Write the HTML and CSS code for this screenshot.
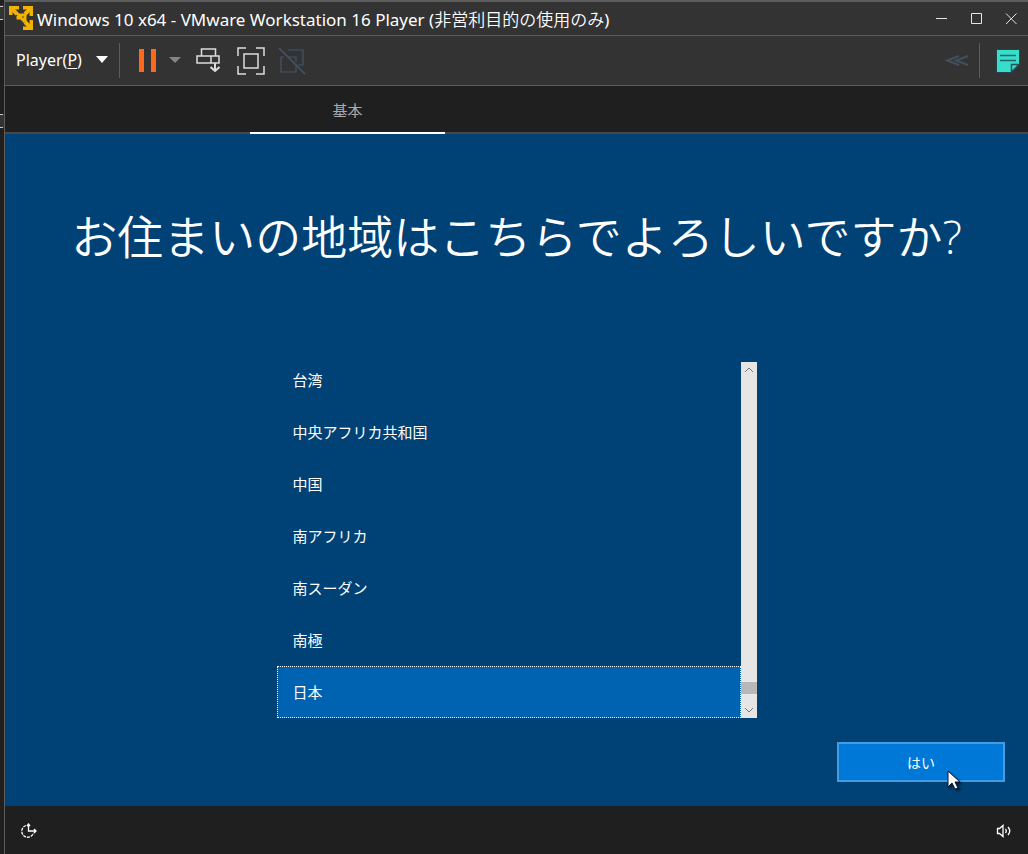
FILE: index.html
```
<!DOCTYPE html>
<html lang="ja">
<head>
<meta charset="utf-8">
<title>Windows 10 x64 - VMware Workstation 16 Player</title>
<link rel="stylesheet" href="styles.css">
</head>
<body>
<div class="desktop">
  <div class="behind" aria-hidden="true">
    <svg width="4" height="160" viewBox="0 0 4 160" shape-rendering="crispEdges"><path fill="#333" d="M0 5h4v15H0zM0 114h4v14H0z"/><path fill="#ccc" d="M0 6h3v1H0zM0 19h3v1H0zM0 114h3v1H0zM0 127h3v1H0z"/></svg>
  </div>
  <div class="window">
    <header class="titlebar">
      <svg class="logo" width="24" height="24" viewBox="0 0 24 24" fill="none" stroke="#f2b200"><path stroke-width="3.500" d="M1.700 9V1.700H10M14 1.700h8.300V10M22.300 14v8.300H14"/><path stroke-width="4" d="M3 3l5 5M21 3l-5 5M21 21l-5-5"/><path stroke-width="3" d="M7 7l3 2h6v7M9 8v4h4M12 12l4 4"/></svg>
      <h1 class="caption">Windows 10 x64 - VMware Workstation 16 Player (<span class="ja">非営利目的の使用のみ</span>)</h1>
      <div class="controls">
        <button type="button" aria-label="最小化"><svg width="12" height="12" viewBox="0 0 12 12"><path d="M1 5.500h11"/></svg></button>
        <button type="button" aria-label="最大化"><svg width="12" height="12" viewBox="0 0 12 12"><path d="M1.500.5h10v10h-10z"/></svg></button>
        <button type="button" aria-label="閉じる"><svg width="12" height="12" viewBox="0 0 12 12"><path d="M1 .5l10.500 10.500M11.500.5L1 11"/></svg></button>
      </div>
    </header>
    <nav class="toolbar">
      <button type="button" class="player"><span>Player(<u>P</u>)</span><svg width="12" height="8" viewBox="0 0 12 8"><path fill="#fff" d="M0 0h12L6 7z"/></svg></button>
      <span class="sep"></span>
      <button type="button" class="pause" aria-label="一時停止"><svg width="42" height="24" viewBox="0 0 42 24"><path fill="#ff6a1a" d="M0 0h5v23H0zM12 0h5v23h-5z"/><path fill="#858585" d="M30 8h12l-6 6z"/></svg></button>
      <button type="button" class="tool" aria-label="Ctrl+Alt+Del を送信"><svg width="28" height="28" viewBox="0 0 28 28" fill="none" stroke="#ddd" stroke-width="1.500"><path d="M5.500 2h14v7h-14zM1 9h22v7H1zM15 9v7"/><path stroke-width="2" d="M19 16v8M14.500 20l4.500 4 4.500-4"/></svg></button>
      <button type="button" class="tool" aria-label="全画面表示"><svg width="28" height="28" viewBox="0 0 28 28" fill="none" stroke="#ddd" stroke-width="1.500"><path d="M1 9V1h8M19 1h8v8M27 19v8h-8M9 27H1v-8"/><path d="M7 7h14v14H7z"/></svg></button>
      <button type="button" class="tool" aria-label="ユニティ" disabled><svg width="28" height="28" viewBox="0 0 28 28" fill="none" stroke="#42566a" stroke-width="1.200"><path d="M10 3h15v15h-5M6 10H3v15h15v-6M11 10h7v5"/><path stroke-width="1.600" d="M1 1l26 26"/></svg></button>
      <button type="button" class="collapse" aria-label="折りたたむ"><svg width="24" height="12" viewBox="0 0 24 12" fill="none" stroke="#42505f" stroke-width="2"><path d="M14 1L2 5.500 14 10M23 1l-12 4.500L23 10"/></svg></button>
      <span class="sep"></span>
      <button type="button" class="note" aria-label="メモ"><svg width="24" height="24" viewBox="0 0 24 24"><path fill="#36dfc9" stroke="#2b3f4d" d="M.5.5h23v15l-8 8H.5z"/><path stroke="#1f6570" stroke-width="1.500" d="M4 6.500h16M4 11.500h16"/><path fill="#36dfc9" stroke="#24505c" stroke-width="1.500" d="M15.500 23v-7.500H23z"/></svg></button>
    </nav>
    <div class="tabs" role="tablist"><button type="button" class="tab" role="tab" aria-selected="true">基本</button></div>
    <main class="screen">
      <h2 class="question">お住まいの地域はこちらでよろしいですか<span class="mark">?</span></h2>
      <div class="picker">
        <ul class="regions" role="listbox" aria-label="地域">
          <li role="option">台湾</li>
          <li role="option">中央アフリカ共和国</li>
          <li role="option">中国</li>
          <li role="option">南アフリカ</li>
          <li role="option">南スーダン</li>
          <li role="option">南極</li>
          <li role="option" aria-selected="true" class="selected">日本</li>
        </ul>
        <div class="scrollbar" aria-hidden="true">
          <svg width="16" height="16" viewBox="0 0 16 16"><path d="M4 10l4-4 4 4"/></svg>
          <span class="thumb"></span>
          <svg width="16" height="16" viewBox="0 0 16 16"><path d="M4 6l4 4 4-4"/></svg>
        </div>
      </div>
      <div class="actions">
        <button type="button" class="yes">はい
          <svg class="cursor" width="16" height="22" viewBox="0 0 16 22"><path fill="#fff" stroke="#0a1430" d="M1 1v16l4-4 3 6 3-1-3-6h5z"/></svg>
        </button>
      </div>
    </main>
    <footer class="bottom">
      <button type="button" aria-label="コンピューターの簡単操作"><svg width="18" height="16" viewBox="0 0 18 16" fill="none" stroke="#fff" stroke-width="1.300"><path stroke-dasharray="3 1" d="M6 2.500a6 6 0 1 0 7.500 7.500"/><path d="M8.500 1v7H16M7 3l1.500-2L10 3M14 6l2 2-2 2"/></svg></button>
      <button type="button" aria-label="音量"><svg width="16" height="14" viewBox="0 0 16 14" fill="none" stroke="#fff" stroke-width="1.300"><path d="M1.500 4.500h2L7 1.500v11L3.500 9.500h-2zM9.500 5q1.500 2 0 4M12 3q3.500 4 0 8"/></svg></button>
    </footer>
  </div>
</div>
</body>
</html>
```

FILE: styles.css
```
* { box-sizing: border-box; }
body {
  margin: 0;
  background: #1f1f1f;
  color: #fff;
  font-family: "Noto Sans", "Noto Sans CJK JP", sans-serif;
}
button {
  margin: 0;
  padding: 0;
  border: 0;
  background: none;
  color: inherit;
  font: inherit;
  display: flex;
  align-items: center;
}
svg { display: block; flex: none; }
.desktop { display: flex; min-height: 100vh; }
.behind { width: 4px; flex: none; background: #1f1f1f; }
.window {
  flex: 1;
  min-width: 0;
  display: flex;
  flex-direction: column;
  border-top: 2px solid #5c5c5c;
  border-left: 1px solid #5c5c5c;
}
.titlebar {
  height: 33px;
  padding: 0 11px 0 4px;
  display: flex;
  align-items: center;
  background: #333;
}
.logo { margin-bottom: 2px; }
.caption {
  flex: 1;
  margin: 2px 0 0 4px;
  font-size: 17px;
  line-height: 24px;
  font-weight: 400;
  white-space: nowrap;
}
.caption .ja { font-family: "Noto Sans CJK JP", sans-serif; font-weight: 350; }
.controls { display: flex; gap: 23px; }
.controls path { fill: none; stroke: #e6e6e6; }
.toolbar {
  height: 51px;
  padding: 0 8px 0 11px;
  display: flex;
  align-items: center;
  background: #333;
  border-top: 1px solid #5c5c5c;
  border-bottom: 1px solid #5c5c5c;
}
.player { gap: 14px; font-size: 16px; line-height: 24px; padding-bottom: 2px; }
.player u { text-underline-offset: 2px; }
.sep { width: 1px; height: 35px; background: #5c5c5c; }
.player + .sep { margin-left: 11px; }
.pause { margin: 0 2px 0 19px; }
.tool { margin-left: 13px; }
.collapse { margin: 0 10px 0 auto; }
.note { margin-left: 16px; }
.tabs {
  height: 48px;
  display: flex;
  border-bottom: 2px solid #484848;
}
.tab {
  width: 195px;
  height: 48px;
  margin-left: 245px;
  justify-content: center;
  border-bottom: 2px solid #fff;
  color: #aaa;
  font-family: "Noto Sans CJK JP", sans-serif;
  font-size: 15px;
}
.screen {
  flex: 1;
  display: flex;
  flex-direction: column;
  align-items: center;
  padding: 66px 23px 24px;
  background: #004275;
  font-family: "Noto Sans CJK JP", sans-serif;
}
.question {
  margin: 0;
  font-size: 46px;
  line-height: 68px;
  font-weight: 350;
  white-space: nowrap;
}
.mark { font-family: "Open Sans", sans-serif; font-weight: 300; }
.picker {
  width: 480px;
  height: 356px;
  max-width: 100%;
  margin-top: 92px;
  display: flex;
}
.regions {
  flex: 1;
  margin: 0;
  padding: 0;
  list-style: none;
  overflow: hidden;
  display: flex;
  flex-direction: column;
  justify-content: flex-end;
}
.regions li {
  flex: none;
  height: 52px;
  padding: 0 15px;
  border: 1px solid transparent;
  font-size: 15px;
  line-height: 50px;
}
.regions .selected { background: #0063b1; border: 1px dotted #fff; }
.scrollbar {
  width: 16px;
  display: flex;
  flex-direction: column;
  background: #e6e6e6;
}
.scrollbar path { fill: none; stroke: #777; }
.thumb { height: 12px; margin: auto 0 8px; background: #b8b8b8; }
.actions { align-self: flex-end; margin-top: 24px; }
.yes {
  position: relative;
  width: 168px;
  height: 40px;
  justify-content: center;
  border: 2px solid #429ce3;
  background: #0078d7;
  font-size: 14px;
}
.cursor {
  position: absolute;
  left: 108px;
  top: 26px;
  filter: drop-shadow(2px 2px 1px #0008);
}
.bottom {
  height: 48px;
  padding: 2px 16px 0 15px;
  display: flex;
  justify-content: space-between;
  align-items: center;
  background: #1f1f1f;
}
```
